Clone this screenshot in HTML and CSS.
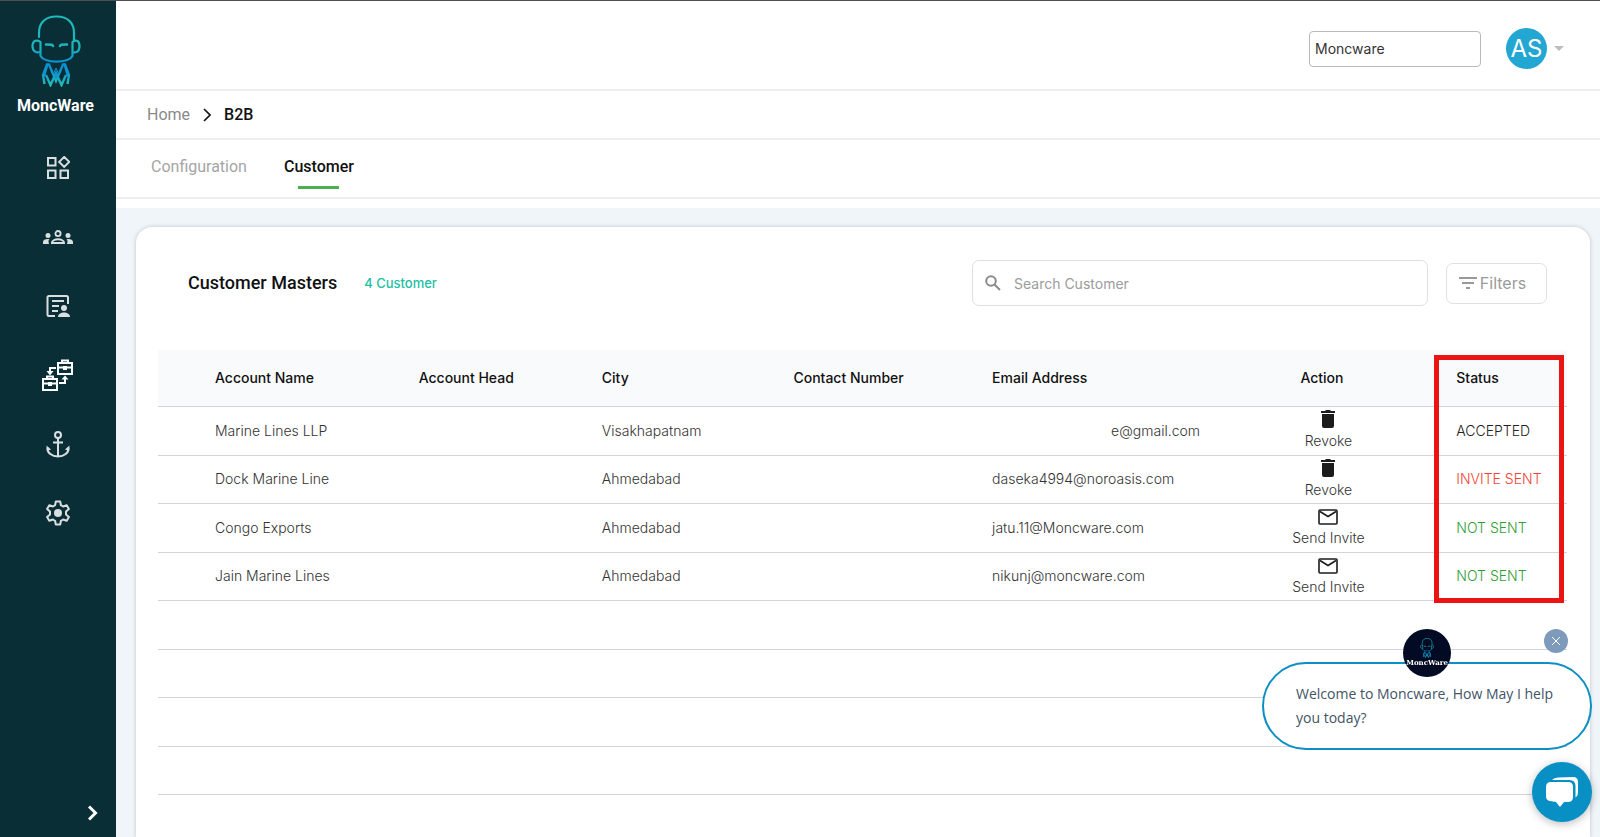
FILE: index.html
```html
<!DOCTYPE html>
<html lang="en">
<head>
<meta charset="utf-8">
<meta name="viewport" content="width=device-width, initial-scale=1">
<title>MoncWare - B2B Customers</title>
<link rel="stylesheet" href="styles.css">
</head>
<body>
<svg class="defs" aria-hidden="true">
  <defs>
    <linearGradient id="monk" x1="0" y1="0" x2="0" y2="72" gradientUnits="userSpaceOnUse">
      <stop offset="0" stop-color="#1cbcb8"/><stop offset=".45" stop-color="#1cb4bd"/><stop offset=".66" stop-color="#0b8fd0"/><stop offset=".8" stop-color="#0f93cf"/><stop offset="1" stop-color="#25c4b4"/>
    </linearGradient>
    <symbol id="head" viewBox="0 0 50 72">
      <g fill="none" stroke="url(#monk)" stroke-width="2.200" stroke-linecap="round" stroke-linejoin="round">
        <path d="M8 22V18C8 8 14 1.500 25.500 1.500S43 8 43 18V25"/>
        <path d="M9.500 27C7 24.500 1.500 25 1.500 31S6 38 9 37M9.500 27V41C14 48.500 37 48.500 41.500 41V27C44 24.500 48.500 25 48.500 31S45 38 41.500 37"/>
        <path d="M15 29.500l6 .3 1 1.200M36 29.500l-6 .3-1 1.200" stroke-width="2.500"/>
      </g>
      <g fill="none" stroke="url(#monk)" stroke-width="2.400" stroke-linejoin="miter">
        <path d="M13.500 69L12 60l4-10.500h2L25 66l7-16.500h2L38 60l-1.500 9"/>
        <path d="M15 60l4.500 10L25 58l5.500 12L35 60M16 51l-3 10M34 51l3 10"/>
        <path d="M25 53l-3 7M25 53l3 7" stroke-width="1"/>
      </g>
    </symbol>
    <symbol id="mail" viewBox="0 0 20 16">
      <rect x="1" y="1" width="18" height="14" rx="1" fill="none" stroke="currentColor" stroke-width="1.600"/>
      <path d="M2 2.500l8 5 8-5" fill="none" stroke="currentColor" stroke-width="1.600"/>
    </symbol>
    <symbol id="trash" viewBox="0 0 14 18">
      <path fill="currentColor" d="M0 1h4l1-1h4l1 1h4v2H0zM1 4h12v12a2 2 0 0 1-2 2H3a2 2 0 0 1-2-2z"/>
    </symbol>
  </defs>
</svg>
<div class="app">
  <aside class="sidebar">
    <a class="brand" href="#">
      <svg class="brand-logo" aria-hidden="true"><use href="#head"/></svg>
      <span>MoncWare</span>
    </a>
    <nav class="nav" aria-label="Main">
      <a href="#" aria-label="Dashboard"><svg viewBox="0 0 24 24" width="24" height="24" fill="none" stroke="currentColor" stroke-width="2"><path d="M2 2h7.500v7.500H2zM2 14.500h7.500V22H2zM14.500 14.500H22V22h-7.500zM18.200.9l5 5-5 5-5-5z"/></svg></a>
      <a href="#" aria-label="Teams"><svg viewBox="0 0 30 14" width="30" height="14" fill="currentColor"><circle cx="5" cy="5.500" r="2.500"/><circle cx="25" cy="5.500" r="2.500"/><path d="M0 14v-2c0-2.500 3-3.500 6.500-3C5 10 5.500 12 6 14zM30 14v-2c0-2.500-3-3.500-6.500-3C25 10 24.500 12 24 14z"/><g fill="none" stroke="currentColor" stroke-width="1.800"><circle cx="15" cy="3.600" r="2.600"/><path d="M8.900 13c-.3-5 12.500-5 12.200 0z"/></g></svg></a>
      <a href="#" aria-label="Contacts"><svg viewBox="0 0 24 24" width="24" height="24" fill="currentColor"><path d="M9 22H3a1.500 1.500 0 0 1-1.500-1.500v-17A1.500 1.500 0 0 1 3 2h17.500A1.500 1.500 0 0 1 22 3.500V10" fill="none" stroke="currentColor" stroke-width="2"/><path d="M6 6h12v2H6zM6 11h7v2H6zM6 16h6v2H6z"/><circle cx="18" cy="14" r="3"/><path d="M12 23c0-6 12-6 12 0z"/></svg></a>
      <a class="active" href="#" aria-label="B2B" aria-current="page"><svg viewBox="0 0 31 32" width="31" height="32" fill="none" stroke="currentColor" stroke-width="2"><path d="M16 4h14v11H16zM20 4V1.500h6V4M16 8.500h14M1 20h14v11H1zM5 20v-2.500h6V20M1 24.500h14M14 9H8v5M17 24h6v-5"/><path d="M21 7h4v4h-4zM6 23h4v4H6zM4.500 12h7L8 16.500zM19.500 20.500h7L23 16.500z" fill="currentColor" stroke="none"/></svg></a>
      <a href="#" aria-label="Ports"><svg viewBox="0 0 24 27" width="24" height="27" fill="none" stroke="currentColor" stroke-width="2"><circle cx="12" cy="4" r="3"/><path d="M12 7v19M7 11.500h10M1.500 16.500C1 22 6 25.500 12 25.500S23 22 22.500 16.500"/><path d="M.5 14.500l4.500 4-4 1.500zM23.500 14.500l-4.500 4 4 1.500z" fill="currentColor" stroke="none"/></svg></a>
      <a href="#" aria-label="Settings"><svg viewBox="0 0 24 26" width="24" height="26" fill="none" stroke="currentColor" stroke-width="2" stroke-linejoin="round"><path d="M9.800 1.500h4.400l.7 3.700 2.200 1.300 3.600-1.300 2.200 3.800-2.900 2.500v3l2.900 2.500-2.200 3.800-3.600-1.300-2.200 1.300-.7 3.700H9.800l-.7-3.700-2.200-1.300-3.600 1.300L1.100 17 4 14.500v-3L1.100 9l2.200-3.800 3.600 1.300 2.200-1.300z"/><circle cx="12" cy="13" r="4" fill="currentColor" stroke="none"/></svg></a>
    </nav>
    <button class="expand" type="button" aria-label="Expand menu"><svg viewBox="0 0 10 16" width="10" height="16" fill="none" stroke="currentColor" stroke-width="3"><path d="M1 1.500L7.500 8 1 14.500"/></svg></button>
  </aside>

  <main class="main">
    <header class="topbar">
      <input class="company" type="text" value="Moncware" aria-label="Company">
      <button class="account" type="button" aria-label="Account menu"><span class="avatar">AS</span><svg viewBox="0 0 10 5" width="10" height="5"><path d="M0 0h10L5 5z" fill="#bdbdbd"/></svg></button>
    </header>
    <nav class="crumbs" aria-label="Breadcrumb">
      <a href="#">Home</a>
      <svg viewBox="0 0 8 14" width="8" height="14" fill="none" stroke="#111" stroke-width="1.600"><path d="M1 1l6 6-6 6"/></svg>
      <span>B2B</span>
    </nav>
    <nav class="tabs" aria-label="Sections">
      <a href="#">Configuration</a>
      <a class="selected" href="#">Customer</a>
    </nav>
    <div class="content">
      <section class="card">
        <div class="card-head">
          <h1>Customer Masters</h1>
          <span class="count">4 Customer</span>
          <label class="search">
            <svg viewBox="0 0 16 16" width="16" height="16" fill="none" stroke="#8b8b8b" stroke-width="2"><circle cx="6" cy="6" r="4.800"/><path d="M9.500 9.500l5.500 5.500"/></svg>
            <input type="text" placeholder="Search Customer" aria-label="Search Customer">
          </label>
          <button class="filters" type="button"><svg viewBox="0 0 18 12" width="18" height="12" fill="#9a9a9a"><path d="M0 0h18v2H0zM3 5h12v2H3zM7 10h4v2H7z"/></svg>Filters</button>
        </div>
        <div class="table-wrap">
          <table>
            <colgroup><col class="c-name"><col class="c-head"><col class="c-city"><col class="c-phone"><col class="c-mail"><col class="c-action"><col class="c-status"></colgroup>
            <thead>
              <tr><th>Account Name</th><th>Account Head</th><th>City</th><th>Contact Number</th><th>Email Address</th><th class="act">Action</th><th>Status</th></tr>
            </thead>
            <tbody>
              <tr><td>Marine Lines LLP</td><td></td><td>Visakhapatnam</td><td></td><td class="masked">e@gmail.com</td><td class="act"><button type="button"><svg class="trash"><use href="#trash"/></svg>Revoke</button></td><td class="accepted">ACCEPTED</td></tr>
              <tr><td>Dock Marine Line</td><td></td><td>Ahmedabad</td><td></td><td>daseka4994@noroasis.com</td><td class="act"><button type="button"><svg class="trash"><use href="#trash"/></svg>Revoke</button></td><td class="sent">INVITE SENT</td></tr>
              <tr><td>Congo Exports</td><td></td><td>Ahmedabad</td><td></td><td>jatu.11@Moncware.com</td><td class="act"><button type="button"><svg class="mail"><use href="#mail"/></svg>Send Invite</button></td><td class="unsent">NOT SENT</td></tr>
              <tr><td>Jain Marine Lines</td><td></td><td>Ahmedabad</td><td></td><td>nikunj@moncware.com</td><td class="act"><button type="button"><svg class="mail"><use href="#mail"/></svg>Send Invite</button></td><td class="unsent">NOT SENT</td></tr>
              <tr><td colspan="7"></td></tr>
              <tr><td colspan="7"></td></tr>
              <tr><td colspan="7"></td></tr>
              <tr><td colspan="7"></td></tr>
            </tbody>
          </table>
          <div class="highlight"></div>
        </div>
      </section>
    </div>
  </main>
</div>

<div class="chat">
  <div class="bubble">
    <p>Welcome to Moncware, How May I help you today?</p>
    <div class="bot"><svg aria-hidden="true"><use href="#head"/></svg><span>MoncWare</span></div>
    <button class="dismiss" type="button" aria-label="Close message"><svg viewBox="0 0 8 8" width="8" height="8" stroke="#fff" stroke-width="1"><path d="M0 0l8 8M8 0L0 8"/></svg></button>
  </div>
  <button class="launcher" type="button" aria-label="Open chat"><svg viewBox="0 0 32 30" width="32" height="30" fill="#fff"><path d="M5 5h17q5 0 5 5v10q0 5-5 5h-4l-4 5-4-5-6-1q-4-.5-4-5V10q0-5 5-5z"/><path d="M6 3Q8 .5 12 .5l15-.5q5 0 5 5v10q0 4-2.500 5.500V9q0-6-6-6z"/></svg></button>
</div>
</body>
</html>
```

FILE: styles.css
```css
* { box-sizing: border-box; }
body {
  margin: 0;
  font: 14px/20px Inter, "Liberation Sans", sans-serif;
  color: #111;
  background: #f0f5fa;
}
a { color: inherit; text-decoration: none; }
button { font: inherit; color: inherit; border: 0; padding: 0; background: none; cursor: pointer; }
.defs { position: absolute; width: 0; height: 0; }
.app { display: flex; min-height: 100vh; border-top: 1px solid #4c4e50; }

/* Sidebar */
.sidebar {
  flex: 0 0 116px;
  display: flex;
  flex-direction: column;
  padding-top: 14px;
  background: #0a2e36;
  color: #d9dfe0;
}
.brand { display: flex; flex-direction: column; align-items: center; gap: 9px; padding-right: 5px; color: #fff; font: 700 16px/20px Roboto, sans-serif; }
.brand-logo { width: 50px; height: 72px; }
.nav { display: flex; flex-direction: column; gap: 41px; margin-top: 38px; }
.nav a { display: flex; align-items: center; justify-content: center; height: 28px; }
.nav .active { color: #fff; padding-right: 2px; }
.expand { display: flex; align-self: flex-end; margin: auto 18px 16px 0; color: #fff; }

/* Top area */
.main { flex: 1; min-width: 0; display: flex; flex-direction: column; }
.topbar { display: flex; align-items: center; justify-content: flex-end; gap: 25px; height: 90px; padding: 7px 36px 0 0; border-bottom: 2px solid #eee; background: #fff; }
.company { width: 172px; height: 36px; padding: 0 5px; border: 1px solid #b9b9b9; border-radius: 4px; font: 14px Inter, sans-serif; color: #333; }
.account { display: flex; align-items: center; gap: 7px; }
.avatar { display: block; width: 41px; height: 41px; border-radius: 50%; background: #22a6d2; color: #fff; font: 24px/41px Inter, sans-serif; text-align: center; }
.crumbs { display: flex; align-items: center; gap: 13px; height: 49px; padding-left: 31px; border-bottom: 2px solid #eee; background: #fff; font: 500 16px/20px Roboto, sans-serif; }
.crumbs a { color: #8a8a8a; font-weight: 400; }
.tabs { display: flex; gap: 37px; height: 59px; padding: 16px 0 0 35px; border-bottom: 2px solid #eee; background: #fff; font: 500 16px/22px Roboto, sans-serif; }
.tabs a { color: #a5a5a5; font-weight: 400; }
.tabs .selected { display: flex; flex-direction: column; align-items: center; gap: 8px; color: #111; font-weight: 500; }
.tabs .selected::after { content: ""; width: 41px; height: 3px; background: #4caf50; }

/* Card */
.content { flex: 1; display: flex; flex-direction: column; padding: 19px 10px 0 20px; border-top: 9px solid #fff; }
.card { flex: 1; padding: 33px 23px 0 22px; border-radius: 16px 16px 0 0; background: #fff; box-shadow: 0 0 4px #0003; }
.card-head { display: flex; align-items: center; padding: 0 20px 0 30px; margin-bottom: 44px; }
h1 { margin: 0 27px 0 0; font: 500 18px/24px Roboto, sans-serif; }
.count { color: #21c0a5; font: 500 13px/20px Inter, sans-serif; }
.search { display: flex; align-items: center; gap: 13px; width: 456px; height: 46px; margin: 0 18px 0 auto; padding: 0 12px; border: 1px solid #e0e0e0; border-radius: 7px; }
.search input { flex: 1; min-width: 0; border: 0; outline: 0; padding: 0; font: 14px Inter, sans-serif; }
.search input::placeholder { color: #9b9b9b; }
.filters { display: flex; align-items: center; justify-content: center; gap: 3px; width: 101px; height: 41px; padding-right: 8px; border: 1px solid #e0e0e0; border-radius: 7px; color: #9a9a9a; font-size: 16px; }

/* Table */
.table-wrap { position: relative; }
table { width: 100%; table-layout: fixed; border-collapse: collapse; }
.c-name { width: 18.5%; }
.c-head { width: 13%; }
.c-city { width: 13.6%; }
.c-phone { width: 14.1%; }
.c-mail { width: 18.7%; }
.c-action { width: 10.2%; }
.c-status { width: 11.9%; }
th, td { padding: 0; border-bottom: 1px solid #d3d3dc; text-align: left; white-space: nowrap; }
th { height: 56px; background: #f9fafc; font-weight: 500; }
td { height: 48px; color: #333; font-weight: 300; }
tbody tr:nth-child(odd) td { height: 49px; }
th:first-child, td:first-child { padding-left: 57px; }
th:last-child, .accepted, .sent, .unsent { padding-left: 57px; }
.masked { padding-left: 119px; }
.act { text-align: center; }
th.act { padding-right: 11px; }
td.act { padding-left: 2px; }
.act button { display: inline-flex; flex-direction: column; align-items: center; height: 41px; vertical-align: middle; justify-content: space-between; }
.act svg { color: #1c1c1c; }
.trash { width: 14px; height: 18px; }
.mail { width: 20px; height: 16px; margin-top: 2px; }
.accepted { color: #222; }
.sent { color: #f44336; }
.unsent { color: #2f9e37; }
.highlight { position: absolute; top: 5px; right: 3px; width: 130px; height: 248px; border: 5px solid #eb1414; pointer-events: none; }

/* Chat widget */
.chat { position: fixed; right: 8px; bottom: 15px; display: flex; flex-direction: column; align-items: flex-end; gap: 12px; }
.bubble { position: relative; width: 330px; padding: 18px 32px; border: 2px solid #0b8fc4; border-radius: 44px; background: #fff; color: #425466; font: 14px/24px "Open Sans", sans-serif; }
.bubble p { margin: 0; }
.bot { position: absolute; top: -35px; left: 139px; display: flex; flex-direction: column; align-items: center; width: 48px; height: 48px; padding-top: 9px; border-radius: 50%; background: #020a24; color: #fff; font: 700 7px/10px "DejaVu Serif", serif; }
.bot svg { width: 14px; height: 20px; }
.dismiss { position: absolute; top: -35px; right: 22px; display: flex; align-items: center; justify-content: center; width: 24px; height: 24px; border-radius: 50%; background: #7f9bbb; }
.launcher { display: flex; align-items: center; justify-content: center; width: 60px; height: 60px; border-radius: 50%; background: #0890c5; box-shadow: 0 2px 8px #0004; }
```
